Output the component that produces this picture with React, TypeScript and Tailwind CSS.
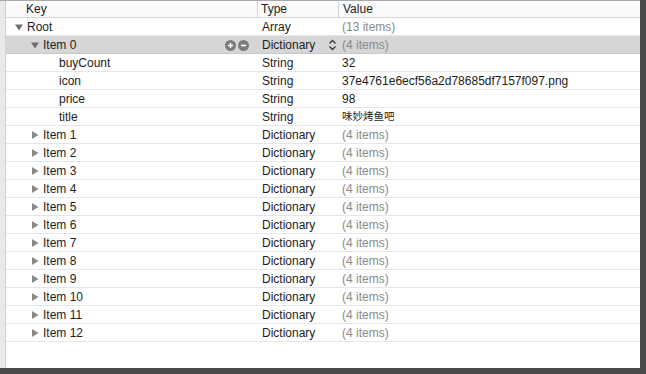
import { ReactNode } from "react";

type Row = {
  key: string;
  level: number;
  type: string;
  value: string;
  arrow?: "open" | "closed";
  dim?: boolean;
  selected?: boolean;
  cjk?: boolean;
};

const rows: Row[] = [
  { key: "Root", level: 0, type: "Array", value: "(13 items)", arrow: "open", dim: true },
  { key: "Item 0", level: 1, type: "Dictionary", value: "(4 items)", arrow: "open", dim: true, selected: true },
  { key: "buyCount", level: 2, type: "String", value: "32" },
  { key: "icon", level: 2, type: "String", value: "37e4761e6ecf56a2d78685df7157f097.png" },
  { key: "price", level: 2, type: "String", value: "98" },
  { key: "title", level: 2, type: "String", value: "味妙烤鱼吧", cjk: true },
  ...Array.from({ length: 12 }, (_, i) => ({
    key: `Item ${i + 1}`,
    level: 1,
    type: "Dictionary",
    value: "(4 items)",
    arrow: "closed" as const,
    dim: true,
  })),
];

function Arrow({ open }: { open: boolean }) {
  return (
    <svg width="8" height="8" viewBox="0 0 8 8" className="shrink-0">
      {open ? <path d="M0 1.5 L8 1.5 L4 7.5 Z" fill="#6f6f6f" /> : <path d="M1 0 L7.5 4 L1 8 Z" fill="#8a8a8a" />}
    </svg>
  );
}

function RoundBtn({ children }: { children: ReactNode }) {
  return (
    <span className="flex h-[11px] w-[11px] items-center justify-center rounded-full bg-[#7c7c7c]">
      <svg width="7" height="7" viewBox="0 0 7 7">{children}</svg>
    </span>
  );
}

export default function App() {
  return (
    <div className="h-[374px] w-[646px] bg-[#4a4a4a] font-['Liberation_Sans',Arial,sans-serif] text-[12px] text-[#1c1c1c]">
      <div className="flex h-[368px] w-[640px] border-t border-[#a9a9a9] bg-white">
        {/* left gutter */}
        <div className="w-[6px] shrink-0 border-r border-[#cfcfd4] bg-[#e9e9ec]" />

        <div className="flex min-w-0 flex-1 flex-col">
          {/* header */}
          <div className="flex h-[17px] items-center border-b border-[#d6d6d6] bg-[#fafafa] leading-none">
            <div className="w-[251px] pl-[20px]">Key</div>
            <div className="h-full w-[81px] border-l border-[#d6d6d6] pl-[3px] leading-[16px]">Type</div>
            <div className="h-full flex-1 border-l border-[#d6d6d6] pl-[4px] leading-[16px]">Value</div>
          </div>

          {rows.map((r) => (
            <div
              key={r.key}
              className={`flex h-[18px] items-center border-b leading-none ${
                r.selected ? "border-[#c8c8c8] bg-[#d6d6d6]" : "border-[#e6e6e6]"
              }`}
            >
              <div className="relative flex h-full w-[251px] items-center">
                {r.arrow && (
                  <span className="absolute top-[5px]" style={{ left: 9 + 16 * r.level }}>
                    <Arrow open={r.arrow === "open"} />
                  </span>
                )}
                <span style={{ paddingLeft: 21 + 16 * r.level }}>{r.key}</span>
                {r.selected && (
                  <span className="absolute left-[219px] top-[4px] flex gap-[2px]">
                    <RoundBtn>
                      <path d="M3.5 1 V6 M1 3.5 H6" stroke="#fff" strokeWidth="1.6" />
                    </RoundBtn>
                    <RoundBtn>
                      <path d="M1 3.5 H6" stroke="#fff" strokeWidth="1.6" />
                    </RoundBtn>
                  </span>
                )}
              </div>
              <div className="relative flex h-full w-[81px] items-center pl-[5px]">
                {r.type}
                {r.selected && (
                  <svg width="9" height="12" viewBox="0 0 9 12" className="absolute right-[1px] top-[3px]">
                    <path d="M1.5 4.5 L4.5 1.5 L7.5 4.5 M1.5 7.5 L4.5 10.5 L7.5 7.5" stroke="#3a3a3a" strokeWidth="1.4" fill="none" />
                  </svg>
                )}
              </div>
              <div
                className={`flex h-full flex-1 items-center pl-[4px] ${r.dim ? "text-[#8a8a8a]" : ""} ${
                  r.cjk ? "font-['Noto_Sans_CJK_SC',sans-serif] text-[10.5px]" : ""
                }`}
              >
                {r.value}
              </div>
            </div>
          ))}
        </div>
      </div>
    </div>
  );
}
